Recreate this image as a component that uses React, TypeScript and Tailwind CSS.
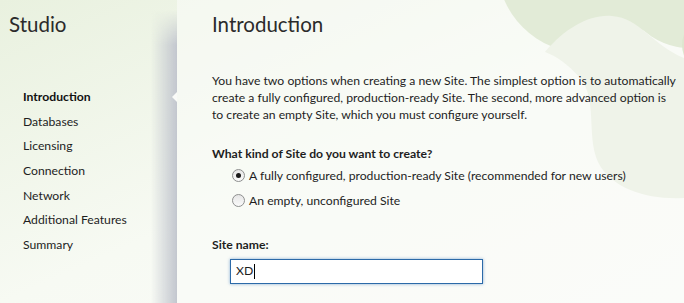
import React from "react";

const navItems = [
  "Introduction",
  "Databases",
  "Licensing",
  "Connection",
  "Network",
  "Additional Features",
  "Summary",
];

function Radio({ checked }: { checked?: boolean }) {
  return (
    <span className="w-[13px] h-[13px] rounded-full border border-[#8e8f8f] bg-gradient-to-b from-[#e6e6e6] to-[#fafafa] flex items-center justify-center shrink-0">
      {checked && <span className="w-[5px] h-[5px] rounded-full bg-[#1a1a1a]" />}
    </span>
  );
}

export default function App() {
  return (
    <div
      className="w-[684px] h-[303px] overflow-hidden flex bg-gradient-to-br from-[#e9f1df] via-[#f7faf3] to-[#fbfcfa] text-[#1e1e1e] text-[12.2px]"
      style={{ fontFamily: 'Lato, "Noto Sans", sans-serif' }}
    >
      {/* Sidebar */}
      <aside className="w-[177px] shrink-0 relative flex flex-col">
        <div className="absolute inset-y-0 right-0 w-[26px] bg-gradient-to-r from-transparent to-[#c2c6ce] [mask-image:linear-gradient(to_bottom,transparent_10px,black_45px)]" />
        <h1 className="pl-[9px] pt-[12px] text-[20.5px] leading-[24px] text-[#2b2b2b]">Studio</h1>
        <nav className="mt-[49px] pl-[23px] flex flex-col">
          {navItems.map((item, i) => (
            <div key={item} className={"h-[24.7px] leading-[24.7px] " + (i === 0 ? "font-bold text-[#111]" : "")}>
              {item}
            </div>
          ))}
        </nav>
      </aside>

      {/* Content */}
      <main className="flex-1 relative bg-[#fafbf8]/60">
        <svg className="absolute inset-0 pointer-events-none" width="507" height="303" viewBox="177 0 507 303">
          <circle cx="585" cy="-35" r="88" fill="#e2eBd7" />
          <circle cx="690" cy="-22" r="70" fill="#e2ebd7" />
          <path
            d="M545,52 C565,28 590,14 612,16 C640,18 652,45 684,58 L684,198 C650,200 612,190 598,162 C586,135 598,100 580,78 C568,64 556,56 545,52 Z"
            fill="#eff3e9"
          />
          <circle cx="712" cy="45" r="30" fill="#dde6cf" />
        </svg>
        <div className="absolute left-[-5px] top-[92px] w-0 h-0 border-y-[5px] border-y-transparent border-r-[5px] border-r-[#fafbf8]" />

        <div className="relative pl-[35px] pt-[12px] pr-[8px]">
          <h2 className="text-[20.5px] leading-[24px] text-[#2b2b2b]">Introduction</h2>
          <p className="mt-[36px] leading-[17px] whitespace-nowrap">
            You have two options when creating a new Site. The simplest option is to automatically
            <br />
            create a fully configured, production-ready Site. The second, more advanced option is
            <br />
            to create an empty Site, which you must configure yourself.
          </p>
          <div className="mt-[22px] font-bold">What kind of Site do you want to create?</div>
          <div className="pl-[20px] flex flex-col">
            <label className="h-[25px] flex items-center gap-[4px]">
              <Radio checked />
              <span>A fully configured, production-ready Site (recommended for new users)</span>
            </label>
            <label className="h-[25px] flex items-center gap-[4px]">
              <Radio />
              <span>An empty, unconfigured Site</span>
            </label>
          </div>
          <div className="mt-[23px] font-bold">Site name:</div>
          <div className="mt-[4px] ml-[18px] w-[253px] h-[25px] border border-[#2c6aa8] bg-white shadow-[0_0_3px_rgba(60,120,190,0.6)] flex items-center pl-[5px]">
            XD<span className="w-px h-[15px] bg-black ml-px" />
          </div>
        </div>
      </main>
    </div>
  );
}
